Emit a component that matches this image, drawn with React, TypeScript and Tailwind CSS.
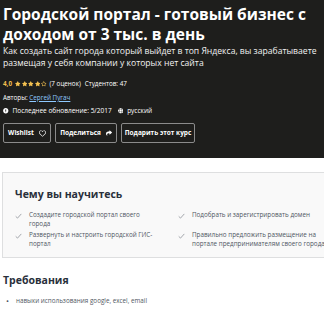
import React from "react";
import { FaRegHeart, FaShare, FaExclamationCircle, FaGlobe, FaStar, FaRegStar } from "react-icons/fa";

const font = { fontFamily: '"Open Sans", "Noto Sans", sans-serif' };

function Check() {
  return (
    <svg width="7" height="6" viewBox="0 0 10 8" className="mt-[2px] shrink-0">
      <path d="M1 4.5 L3.6 7 L9 1" fill="none" stroke="#8a8f96" strokeWidth="1.1" />
    </svg>
  );
}

function Item({ text, wide }: { text: string; wide?: boolean }) {
  return (
    <div className="flex items-start gap-[7px]">
      <Check />
      <div className={(wide ? "w-[136px]" : "w-[127px]") + " text-[6.3px] leading-[8.5px] text-[#505763]"}>{text}</div>
    </div>
  );
}

export default function App() {
  return (
    <div className="w-[324px] h-[324px] overflow-hidden bg-white" style={font}>
      <div className="bg-[#1e1e1c] h-[158px] px-[3px] pt-[4px] text-white">
        <h1 className="text-[15.5px] leading-[20px] font-bold">
          Городской портал - готовый бизнес с доходом от 3 тыс. в день
        </h1>
        <p className="mt-[2px] text-[8.6px] leading-[11.5px] text-[#f2f2f2]">
          Как создать сайт города который выйдет в топ Яндекса, вы зарабатываете размещая у себя компании у которых нет сайта
        </p>
        <div className="mt-[11px] flex items-center text-[6.3px] leading-[8px]">
          <span className="text-[#f4c150] font-bold">4,0</span>
          <span className="ml-[3px] flex gap-[1px] text-[#f4c150]">
            <FaStar size={5.5} />
            <FaStar size={5.5} />
            <FaStar size={5.5} />
            <FaStar size={5.5} />
            <FaRegStar size={5.5} />
          </span>
          <span className="ml-[3px]">(7 оценок)</span>
          <span className="ml-[4px]">Студентов: 47</span>
        </div>
        <div className="mt-[6px] text-[6.3px] leading-[8px]">
          Авторы: <span className="text-[#8ec9ff] underline">Сергей Пугач</span>
        </div>
        <div className="mt-[5px] flex items-center text-[6.5px] leading-[8px]">
          <FaExclamationCircle size={5.5} />
          <span className="ml-[4px]">Последнее обновление: 5/2017</span>
          <FaGlobe size={5.5} className="ml-[6px]" />
          <span className="ml-[4px]">русский</span>
        </div>
        <div className="mt-[8px] flex gap-[4px] text-[6.5px] font-bold">
          <button className="h-[20px] w-[48px] border border-[#8b8b8b] rounded-[2px] flex items-center justify-center gap-[5px]">
            Wishlist <FaRegHeart size={7} />
          </button>
          <button className="h-[20px] w-[62px] border border-[#8b8b8b] rounded-[2px] flex items-center justify-center gap-[5px]">
            Поделиться <FaShare size={6} />
          </button>
          <button className="h-[20px] w-[74px] border border-[#8b8b8b] rounded-[2px] flex items-center justify-center">
            Подарить этот курс
          </button>
        </div>
      </div>
      <div className="pt-[14px] pl-[2px]">
        <div className="w-[340px] h-[86px] border border-[#dedfe0] bg-[#f9f9f9] pl-[12px] pt-[13px]">
          <h2 className="text-[10.5px] leading-[16px] font-bold text-[#29303b]">Чему вы научитесь</h2>
          <div className="mt-[9px] grid grid-cols-[163px_163px] gap-y-[3px]">
            <Item text="Создадите городской портал своего города" />
            <Item text="Подобрать и зарегистрировать домен" wide />
            <Item text="Развернуть и настроить городской ГИС-портал" />
            <Item text="Правильно предложить размещение на портале предпринимателям своего города" wide />
          </div>
        </div>
        <h2 className="mt-[14px] pl-[1px] text-[10.5px] leading-[16px] font-bold text-[#29303b]">Требования</h2>
        <div className="mt-[9px] pl-[4px] flex items-center gap-[7px] text-[6.3px] leading-[8.5px] text-[#505763]">
          <span className="text-[8px]">•</span>
          <span>навыки использования google, excel, email</span>
        </div>
      </div>
    </div>
  );
}
